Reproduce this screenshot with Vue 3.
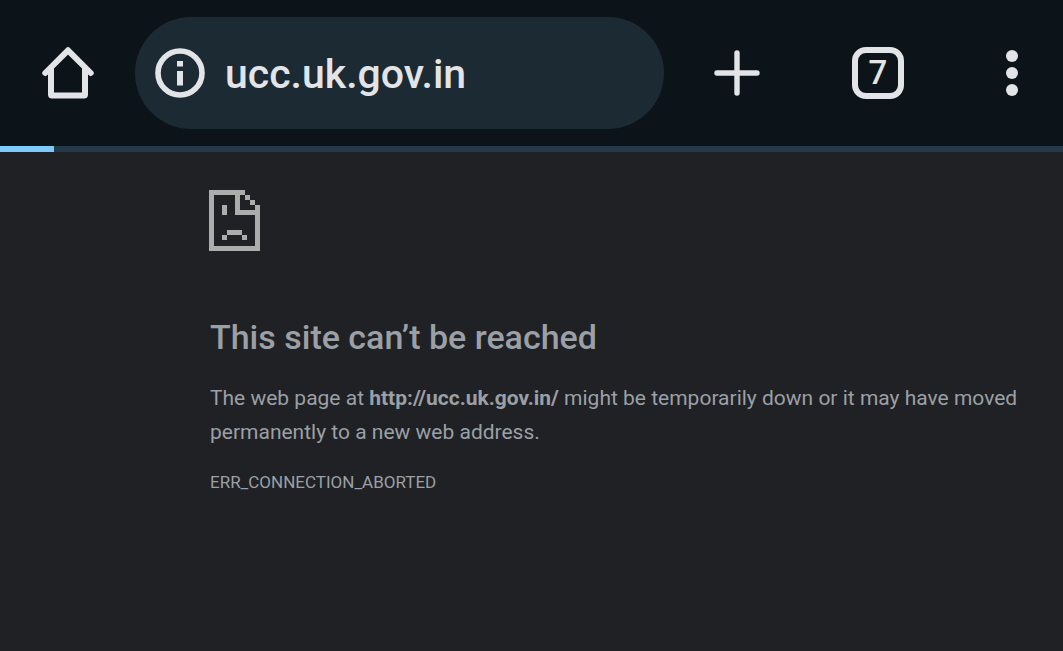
<script setup>
const host = 'ucc.uk.gov.in'
const tabCount = 7
const progress = 5.1
</script>

<template>
  <div class="browser">
    <header class="toolbar">
      <button class="tool home" type="button" aria-label="Home">
        <svg width="56" height="56" viewBox="0 0 56 56" fill="none" stroke="currentColor" stroke-width="6" stroke-linecap="round" stroke-linejoin="round">
          <path d="M5.3 28 28 5.3 50.7 28" />
          <path d="M11 24v25.6q0 1 1 1h32q1 0 1-1V24" />
        </svg>
      </button>
      <div class="address">
        <button class="info" type="button" aria-label="Site information">
          <svg width="50" height="50" viewBox="0 0 50 50">
            <circle cx="25" cy="25" r="22" fill="none" stroke="currentColor" stroke-width="5.6" />
            <path fill="currentColor" d="M22 13h6v5.5h-6zM22 23h6v14.5h-6z" />
          </svg>
        </button>
        <input class="url" type="text" aria-label="Address" :value="host" spellcheck="false" />
      </div>
      <button class="tool" type="button" aria-label="New tab">
        <svg width="46" height="46" viewBox="0 0 46 46" fill="none" stroke="currentColor" stroke-width="5.4" stroke-linecap="round">
          <path d="M23 3v40M3 23h40" />
        </svg>
      </button>
      <button class="tool" type="button" aria-label="Open tabs">
        <span class="tabs">{{ tabCount }}</span>
      </button>
      <button class="tool more" type="button" aria-label="More options">
        <svg width="12" height="46" viewBox="0 0 12 46" fill="currentColor">
          <circle cx="6" cy="6" r="6" />
          <circle cx="6" cy="23" r="6" />
          <circle cx="6" cy="40" r="6" />
        </svg>
      </button>
    </header>
    <div class="progress" role="progressbar" aria-label="Page loading" :aria-valuenow="progress">
      <div class="bar" :style="{ width: progress + '%' }"></div>
    </div>
    <main class="page">
      <svg class="sad" width="52" height="61" viewBox="1 0 52 61" fill="currentColor" shape-rendering="crispEdges" overflow="visible" aria-hidden="true">
        <path fill-rule="evenodd" d="M0 0h36v5h5v5h5v5h5v46H0zM5 5v51h41V25H26V5zM31 5v15h15v-5h-5v-5h-5V5z" />
        <path d="M13 15h5v10h-5zM18 40h15v5H18zM13 45h5v5h-5zM33 45h5v5h-5z" />
      </svg>
      <h1>This site can’t be reached</h1>
      <p class="message">The web page at <strong>http://ucc.uk.gov.in/</strong> might be temporarily down or it may have moved permanently to a new web address.</p>
      <p class="code">ERR_CONNECTION_ABORTED</p>
    </main>
  </div>
</template>

<style>
body {
  margin: 0;
  background: #202124;
}
</style>

<style scoped>
.browser {
  min-height: 100vh;
  font-family: Roboto, "Liberation Sans", sans-serif;
  color: #9aa0a6;
  background: #202124;
}
.toolbar {
  display: grid;
  grid-template-columns: 135px minmax(0, 1fr) 146px 136px 117px;
  align-items: center;
  padding: 17px 0;
  background: #0c141a;
  color: #e2e4e7;
}
button {
  display: flex;
  padding: 0;
  border: 0;
  background: none;
  color: inherit;
  font: inherit;
}
.tool {
  align-items: center;
  justify-content: center;
  height: 112px;
}
.more {
  justify-content: flex-end;
  padding-right: 45px;
}
.address {
  display: flex;
  align-items: center;
  gap: 20px;
  height: 112px;
  padding: 0 20px;
  box-sizing: border-box;
  border-radius: 56px;
  background: #1b2a33;
}
.url {
  flex: 1;
  min-width: 0;
  padding: 2px 0 0;
  border: 0;
  outline: 0;
  background: none;
  color: inherit;
  font: 500 41px/56px Roboto, "Liberation Sans", sans-serif;
}
.tabs {
  display: flex;
  align-items: center;
  justify-content: center;
  box-sizing: border-box;
  width: 52px;
  height: 52px;
  border: 6px solid currentColor;
  border-radius: 14px;
  font-size: 33px;
  font-weight: 500;
  line-height: 40px;
}
.progress {
  height: 6px;
  background: #243947;
}
.bar {
  height: 100%;
  background: #7ccbfb;
}
.page {
  padding: 38px 36px 38px 210px;
}
.sad {
  display: block;
  color: #acacac;
}
h1 {
  margin: 66px 0 0;
  font-size: 34px;
  font-weight: 500;
  line-height: 40px;
}
.message {
  margin: 24px 0 0;
  font-size: 21px;
  line-height: 34px;
}
.code {
  margin: 20px 0 0;
  font-size: 17px;
  line-height: 26px;
}
</style>
